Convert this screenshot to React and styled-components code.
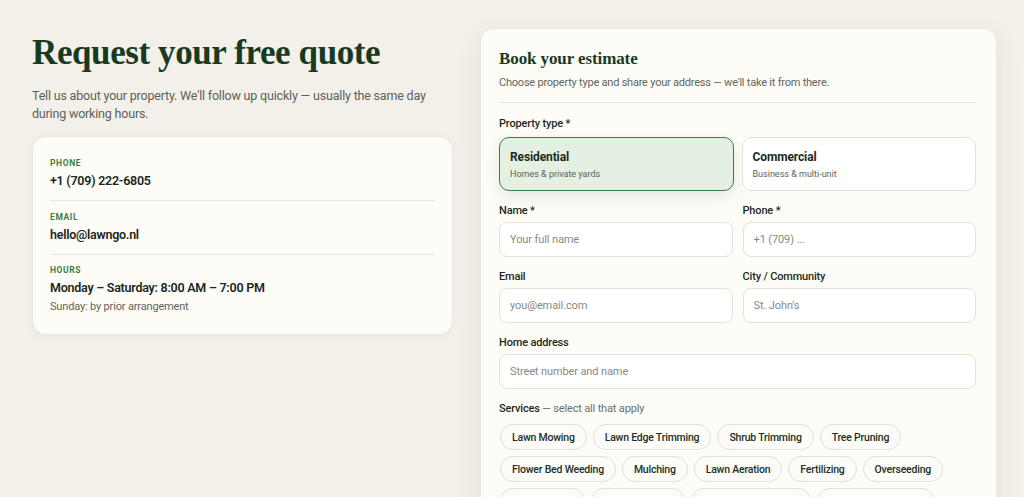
import React, { useState } from "react";
import styled, { createGlobalStyle } from "styled-components";

const Global = createGlobalStyle`
  * { box-sizing: border-box; }
  html, body { margin: 0; padding: 0; }
  body {
    background: #f3f0e9;
    font-family: Roboto, Inter, "Noto Sans", "Liberation Sans", sans-serif;
    color: #1c2a1f;
    overflow: hidden;
  }
`;

const Page = styled.main`
  display: grid;
  grid-template-columns: 421px 517px;
  column-gap: 27px;
  align-items: start;
  padding: 28px 0 0 32px;
  height: 497px;
  overflow: hidden;
`;

const Intro = styled.section`
  display: flex;
  flex-direction: column;
`;

const Headline = styled.h1`
  margin: 6px 0 0;
  font-family: "Liberation Serif", "DejaVu Serif", serif;
  font-weight: 700;
  font-size: 35px;
  line-height: 38px;
  letter-spacing: -0.4px;
  color: #173b22;
`;

const Lead = styled.p`
  margin: 15px 0 0;
  font-size: 12.5px;
  line-height: 18px;
  letter-spacing: -0.015em;
  color: #5c6158;
  max-width: 410px;
`;

const InfoCard = styled.div`
  margin-top: 13px;
  background: #fdfcf7;
  border: 1px solid #ebe8df;
  border-radius: 14px;
  padding: 20px 17px 19px 17px;
  box-shadow: 0 2px 10px rgba(60, 50, 20, 0.04);
`;

const InfoItem = styled.div`
  display: flex;
  flex-direction: column;
  padding: 10px 0;
  border-bottom: 1px solid #e9e6dd;
  &:first-child { padding-top: 0; }
  &:last-child { border-bottom: 0; padding-bottom: 0; padding-top: 9px; }
`;

const InfoLabel = styled.span`
  font-size: 8.5px;
  line-height: 12px;
  font-weight: 700;
  letter-spacing: 0.6px;
  text-transform: uppercase;
  color: #3f7e44;
`;

const InfoValue = styled.span`
  margin-top: 3px;
  font-size: 12.5px;
  line-height: 18px;
  font-weight: 600;
  letter-spacing: -0.02em;
  color: #1b271d;
`;

const InfoNote = styled.span`
  margin-top: 2px;
  font-size: 11px;
  line-height: 16px;
  letter-spacing: -0.015em;
  color: #62665e;
`;

const FormCard = styled.section`
  background: #fdfcf7;
  border: 1px solid #ebe8df;
  border-radius: 14px;
  padding: 18px 20px 40px 18px;
  min-height: 520px;
  box-shadow: 0 8px 28px rgba(60, 50, 20, 0.07);
`;

const FormTitle = styled.h2`
  margin: 0;
  font-family: "Liberation Serif", "DejaVu Serif", serif;
  font-weight: 700;
  font-size: 17px;
  line-height: 24px;
  letter-spacing: -0.1px;
  color: #173b22;
`;

const FormLead = styled.p`
  margin: 4px 0 0;
  padding-bottom: 11px;
  font-size: 11px;
  line-height: 16px;
  letter-spacing: -0.02em;
  color: #62665e;
  border-bottom: 1px solid #e6e3da;
`;

const Label = styled.label`
  display: block;
  padding-top: 2px;
  font-size: 11px;
  line-height: 16px;
  font-weight: 500;
  letter-spacing: -0.015em;
  color: #1f2a21;
`;

const Muted = styled.span`
  font-weight: 400;
  color: #6b6f67;
`;

const Block = styled.div`
  margin-top: ${(p) => p.$top || 10}px;
`;

const Pair = styled.div`
  display: grid;
  grid-template-columns: 1fr 1fr;
  column-gap: ${(p) => p.$gap || 10}px;
  margin-top: ${(p) => p.$top || 10}px;
`;

const Field = styled.div`
  display: flex;
  flex-direction: column;
  gap: 3px;
`;

const Input = styled.input`
  height: 35px;
  width: 100%;
  border: 1px solid #e4e1d8;
  border-radius: 8px;
  background: #ffffff;
  padding: 0 10px;
  font: inherit;
  font-size: 11px;
  letter-spacing: -0.01em;
  color: #1f2a21;
  outline: none;
  &::placeholder { color: #878a82; }
`;

const Option = styled.button`
  display: flex;
  flex-direction: column;
  align-items: flex-start;
  height: 54px;
  padding: 11px 10px;
  border-radius: 10px;
  text-align: left;
  cursor: pointer;
  font: inherit;
  border: 1px solid ${(p) => (p.$on ? "#3f7a45" : "#e4e1d8")};
  background: ${(p) => (p.$on ? "#e3f0e2" : "#ffffff")};
  box-shadow: ${(p) => (p.$on ? "0 6px 14px rgba(40, 80, 40, 0.10)" : "none")};
`;

const OptionTitle = styled.span`
  font-size: 12px;
  line-height: 16px;
  font-weight: 700;
  letter-spacing: -0.01em;
  color: #1c2a1f;
`;

const OptionSub = styled.span`
  margin-top: 3px;
  font-size: 9px;
  line-height: 12px;
  color: #5d6259;
`;

const Chips = styled.div`
  display: flex;
  flex-wrap: wrap;
  gap: 6px;
  margin-top: 7px;
  padding-left: 1px;
`;

const Chip = styled.button`
  height: 26px;
  padding: 0 11px;
  border-radius: 999px;
  border: 1px solid #e3e0d6;
  background: ${(p) => (p.$on ? "#e3f0e2" : "#fdfcf8")};
  font: inherit;
  font-size: 10.5px;
  font-weight: 500;
  letter-spacing: -0.02em;
  color: #223024;
  cursor: pointer;
`;

const services = [
  "Lawn Mowing",
  "Lawn Edge Trimming",
  "Shrub Trimming",
  "Tree Pruning",
  "Flower Bed Weeding",
  "Mulching",
  "Lawn Aeration",
  "Fertilizing",
  "Overseeding",
  "Leaf Removal",
  "Gutter Cleaning",
  "Spring & Fall Cleanup",
  "Garden Maintenance",
];

export default function App() {
  const [type, setType] = useState("residential");
  const [picked, setPicked] = useState([]);
  const toggle = (s) =>
    setPicked((p) => (p.includes(s) ? p.filter((x) => x !== s) : [...p, s]));

  return (
    <>
      <Global />
      <Page>
        <Intro>
          <Headline>Request your free quote</Headline>
          <Lead>
            Tell us about your property. We'll follow up quickly — usually the same day
            during working hours.
          </Lead>
          <InfoCard>
            <InfoItem>
              <InfoLabel>Phone</InfoLabel>
              <InfoValue>+1 (709) 222-6805</InfoValue>
            </InfoItem>
            <InfoItem>
              <InfoLabel>Email</InfoLabel>
              <InfoValue>hello@lawngo.nl</InfoValue>
            </InfoItem>
            <InfoItem>
              <InfoLabel>Hours</InfoLabel>
              <InfoValue>Monday – Saturday: 8:00 AM – 7:00 PM</InfoValue>
              <InfoNote>Sunday: by prior arrangement</InfoNote>
            </InfoItem>
          </InfoCard>
        </Intro>

        <FormCard>
          <FormTitle>Book your estimate</FormTitle>
          <FormLead>
            Choose property type and share your address — we'll take it from there.
          </FormLead>

          <Block $top={11}>
            <Label>Property type *</Label>
          </Block>
          <Pair $top={5} $gap={8}>
            <Option $on={type === "residential"} onClick={() => setType("residential")}>
              <OptionTitle>Residential</OptionTitle>
              <OptionSub>Homes &amp; private yards</OptionSub>
            </Option>
            <Option $on={type === "commercial"} onClick={() => setType("commercial")}>
              <OptionTitle>Commercial</OptionTitle>
              <OptionSub>Business &amp; multi-unit</OptionSub>
            </Option>
          </Pair>

          <Pair $top={10}>
            <Field>
              <Label>Name *</Label>
              <Input placeholder="Your full name" />
            </Field>
            <Field>
              <Label>Phone *</Label>
              <Input placeholder="+1 (709) ..." />
            </Field>
          </Pair>

          <Pair>
            <Field>
              <Label>Email</Label>
              <Input placeholder="you@email.com" />
            </Field>
            <Field>
              <Label>City / Community</Label>
              <Input placeholder="St. John's" />
            </Field>
          </Pair>

          <Block>
            <Field>
              <Label>Home address</Label>
              <Input placeholder="Street number and name" />
            </Field>
          </Block>

          <Block>
            <Label>
              Services <Muted>— select all that apply</Muted>
            </Label>
            <Chips>
              {services.map((s) => (
                <Chip key={s} $on={picked.includes(s)} onClick={() => toggle(s)}>
                  {s}
                </Chip>
              ))}
            </Chips>
          </Block>
        </FormCard>
      </Page>
    </>
  );
}
